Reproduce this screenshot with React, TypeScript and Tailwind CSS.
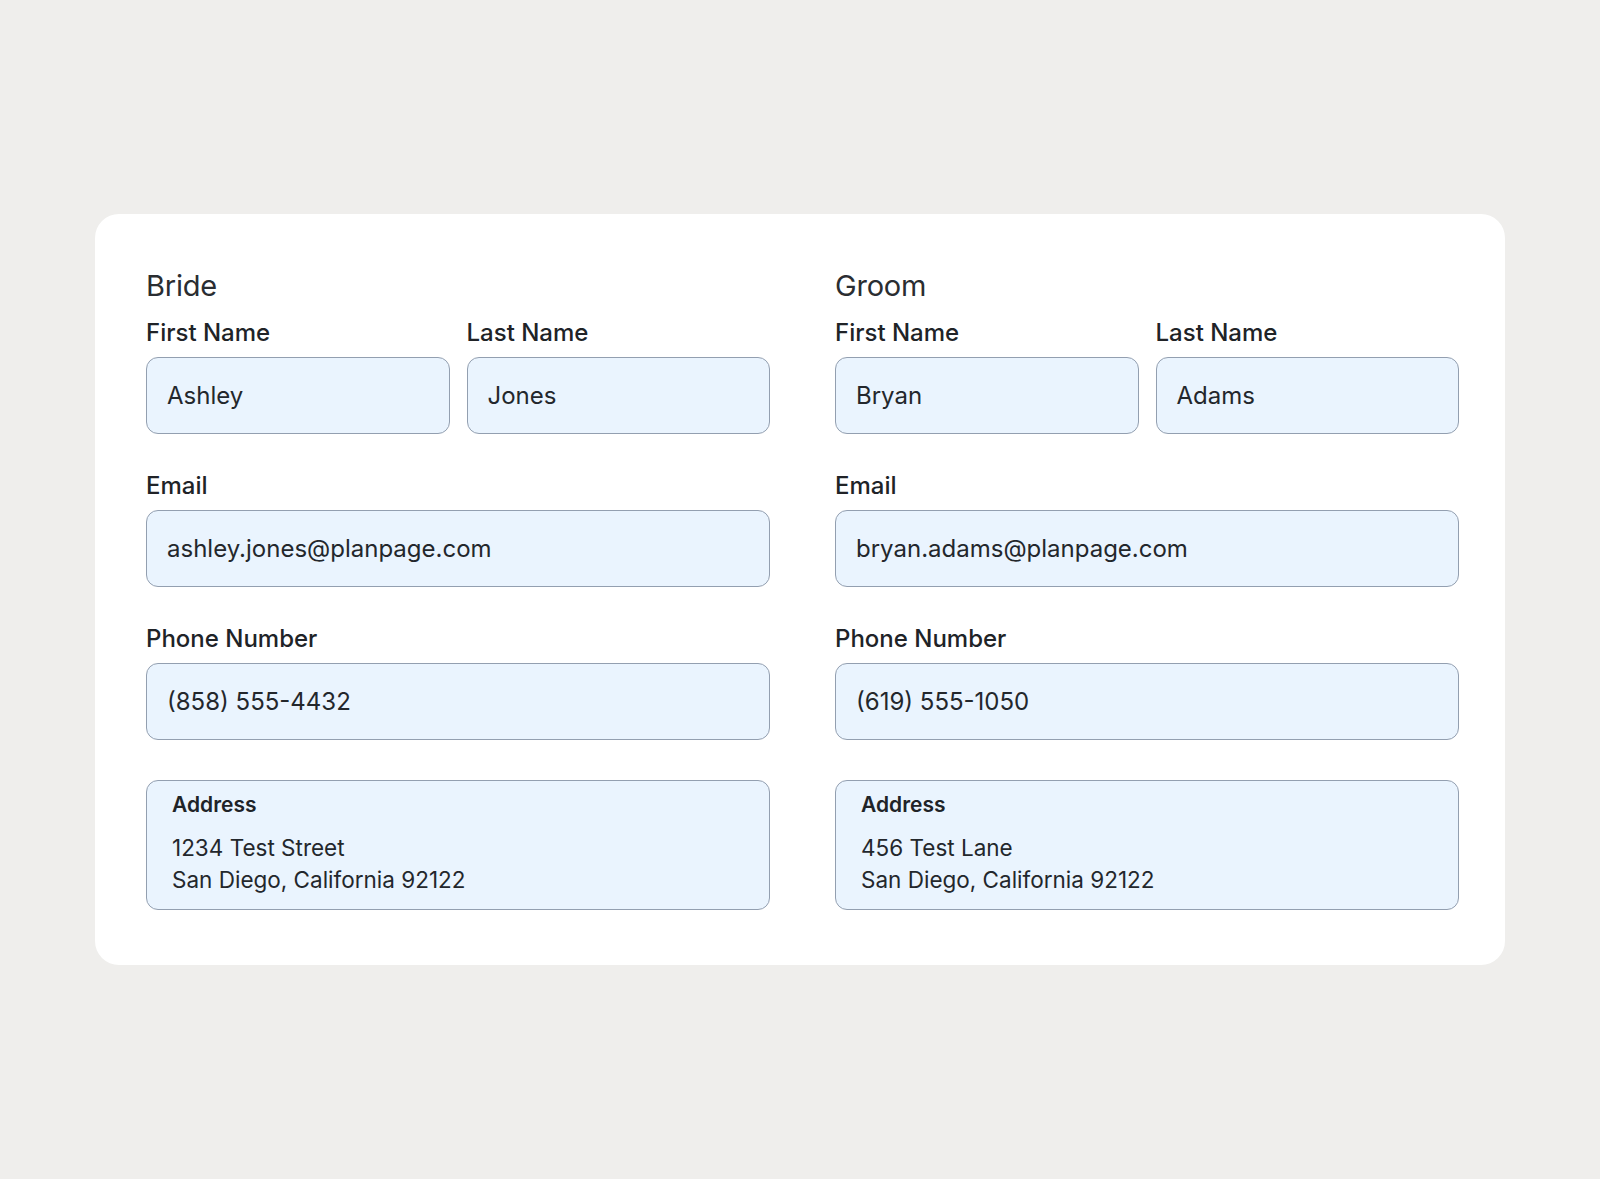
const font = { fontFamily: "Inter, 'Noto Sans', sans-serif" };

interface Person {
  title: string;
  first: string;
  last: string;
  email: string;
  phone: string;
  street: string;
  city: string;
}

const people: Person[] = [
  {
    title: "Bride",
    first: "Ashley",
    last: "Jones",
    email: "ashley.jones@planpage.com",
    phone: "(858) 555-4432",
    street: "1234 Test Street",
    city: "San Diego, California 92122",
  },
  {
    title: "Groom",
    first: "Bryan",
    last: "Adams",
    email: "bryan.adams@planpage.com",
    phone: "(619) 555-1050",
    street: "456 Test Lane",
    city: "San Diego, California 92122",
  },
];

function Label({ children }: { children: React.ReactNode }) {
  return (
    <div className="h-[28px] text-[24px] leading-[28px] font-medium text-[#202327] mb-[10px]">
      {children}
    </div>
  );
}

function Field({ value }: { value: string }) {
  return (
    <div className="h-[77px] flex items-center px-[20px] rounded-[12px] border border-[#939fb0] bg-[#eaf4fe] text-[24px] text-[#23272c]">
      {value}
    </div>
  );
}

function PersonColumn({ p }: { p: Person }) {
  return (
    <div className="flex flex-col">
      <h2 className="h-[36px] text-[29px] leading-[36px] font-normal tracking-[-0.2px] text-[#2a2d31] mb-[15px]">
        {p.title}
      </h2>

      {/* Names */}
      <div className="grid grid-cols-2 gap-[17px]">
        <div>
          <Label>First Name</Label>
          <Field value={p.first} />
        </div>
        <div>
          <Label>Last Name</Label>
          <Field value={p.last} />
        </div>
      </div>

      <div className="mt-[38px]">
        <Label>Email</Label>
        <Field value={p.email} />
      </div>

      <div className="mt-[38px]">
        <Label>Phone Number</Label>
        <Field value={p.phone} />
      </div>

      {/* Address */}
      <div className="mt-[40px] rounded-[12px] border border-[#939fb0] bg-[#eaf4fe] pl-[25px] pt-[10px] pb-[13px]">
        <div className="h-[28px] text-[21px] leading-[28px] font-semibold text-[#202327] mb-[12.5px]">
          Address
        </div>
        <div className="text-[22.5px] leading-[32px] text-[#23272c]">
          <div>{p.street}</div>
          <div>{p.city}</div>
        </div>
      </div>
    </div>
  );
}

export default function App() {
  return (
    <div style={font} className="min-h-screen w-full bg-[#efeeec] flex items-center justify-center">
      <div className="w-[1410px] bg-white rounded-[24px] pl-[51px] pr-[46px] pt-[54px] pb-[55px] grid grid-cols-2 gap-[65px]">
        {people.map((p) => (
          <PersonColumn key={p.title} p={p} />
        ))}
      </div>
    </div>
  );
}
